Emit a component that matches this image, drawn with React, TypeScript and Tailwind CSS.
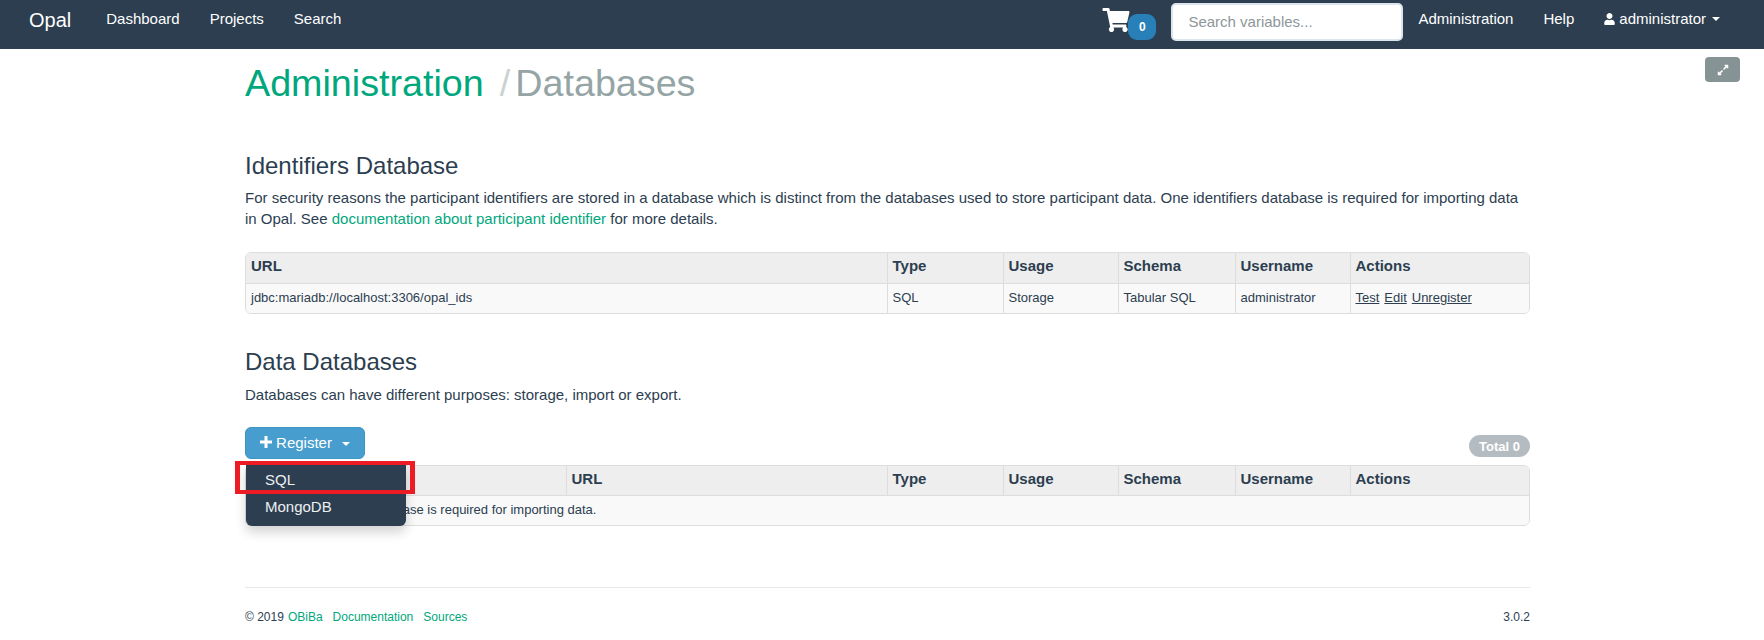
import React from "react";
import { FaShoppingCart, FaUser, FaExpandAlt } from "react-icons/fa";

const Caret = () => (
  <span className="ml-[6px] inline-block h-0 w-0 border-x-[4px] border-t-[4px] border-x-transparent border-t-current align-middle" />
);

const th = "border-l border-[#dddddd] px-[5px] pb-[4px] h-[30px] text-left align-middle text-[15px] font-bold first:border-l-0";
const th2 = "border-l border-[#dddddd] px-[5px] pb-[3px] h-[29px] text-left align-middle text-[15px] font-bold first:border-l-0";
const td = "border-l border-t border-[#dddddd] px-[5px] pb-[1px] h-[30px] align-middle text-[13px] first:border-l-0";

function Widths({ first }: { first: boolean }) {
  return first ? (
    <colgroup>
      <col className="w-[641px]" />
      <col className="w-[116px]" />
      <col className="w-[115px]" />
      <col className="w-[117px]" />
      <col className="w-[115px]" />
      <col />
    </colgroup>
  ) : (
    <colgroup>
      <col className="w-[320px]" />
      <col className="w-[321px]" />
      <col className="w-[116px]" />
      <col className="w-[115px]" />
      <col className="w-[117px]" />
      <col className="w-[115px]" />
      <col />
    </colgroup>
  );
}

export default function App() {
  return (
    <div className="min-h-[640px] bg-white text-[#2c3e50] font-['Liberation_Sans',Arial,sans-serif] text-[15px] leading-[21px]">
      <nav className="flex h-[49px] items-start bg-[#2c3e50] text-white">
        <a className="ml-[29px] mt-[10px] text-[20px] leading-[21px]">Opal</a>
        <a className="ml-[35px] mt-[8px]">Dashboard</a>
        <a className="ml-[30px] mt-[8px]">Projects</a>
        <a className="ml-[30px] mt-[8px]">Search</a>
        <div className="ml-auto flex items-start">
          <div className="relative mr-[41px] mt-[8px] h-[24px] w-[28px]">
            <FaShoppingCart className="h-[24px] w-[28px] text-white" />
            <span className="absolute left-[26px] top-[6px] flex h-[26px] w-[28px] items-center justify-center rounded-[9px] bg-[#2980b9] text-[12px] font-bold">0</span>
          </div>
          <input
            readOnly
            placeholder="Search variables..."
            className="mt-[3px] h-[38px] w-[232px] rounded-[5px] border-2 border-[#dce4ec] bg-white px-[15px] pb-[2px] text-[15px] text-[#2c3e50] placeholder:text-[#8d9699]"
          />
          <a className="ml-[15px] mt-[8px]">Administration</a>
          <a className="ml-[30px] mt-[8px]">Help</a>
          <a className="ml-[30px] mr-[44px] mt-[8px] flex items-center">
            <FaUser className="mr-[4px] h-[12px] w-[11px]" />
            administrator
            <Caret />
          </a>
        </div>
      </nav>

      <main className="relative ml-[245px] w-[1285px]">
        <h1 className="pt-[13px] text-[37.7px] leading-[43px] font-normal text-[#00a77d]">
          Administration
          <span className="ml-[16px] text-[#ccd1d1]">/</span>
          <span className="ml-[5px] text-[#95a5a6]">Databases</span>
        </h1>

        <h2 className="mt-[47px] text-[24px] leading-[27px] font-normal">Identifiers Database</h2>
        <p className="mt-[8px] text-[15px] leading-[21px]">
          For security reasons the participant identifiers are stored in a database which is distinct from the databases used to store participant data. One identifiers database is required for importing data in Opal. See{" "}
          <a className="text-[#00a77d]">documentation about participant identifier</a> for more details.
        </p>

        <div className="mt-[23px] overflow-hidden rounded-[6px] border border-[#dddddd]">
          <table className="w-full table-fixed border-collapse">
            <Widths first />
            <thead className="bg-[#eeeeee]">
              <tr>
                {["URL", "Type", "Usage", "Schema", "Username", "Actions"].map((h) => (
                  <th key={h} className={th}>{h}</th>
                ))}
              </tr>
            </thead>
            <tbody className="bg-[#f9f9f9]">
              <tr>
                <td className={td}>jdbc:mariadb://localhost:3306/opal_ids</td>
                <td className={td}>SQL</td>
                <td className={td}>Storage</td>
                <td className={td}>Tabular SQL</td>
                <td className={td}>administrator</td>
                <td className={td}>
                  <a className="underline">Test</a>
                  <a className="ml-[5px] underline">Edit</a>
                  <a className="ml-[5px] underline">Unregister</a>
                </td>
              </tr>
            </tbody>
          </table>
        </div>

        <h2 className="mt-[34px] text-[24px] leading-[27px] font-normal">Data Databases</h2>
        <p className="mt-[9px] text-[15px] leading-[21px]">Databases can have different purposes: storage, import or export.</p>

        <div className="relative mt-[22px] flex items-end justify-between">
          <button className="flex h-[32px] w-[120px] items-center justify-center rounded-[6px] border border-[#3f94c6] bg-[#469dce] pb-[2px] text-[15px] text-white">
            <svg viewBox="0 0 12 12" className="mr-[4px] h-[12px] w-[12px]" fill="currentColor">
              <path d="M4.5 0h3v4.5H12v3H7.5V12h-3V7.5H0v-3h4.5z" />
            </svg>
            Register
            <span className="ml-[4px]"><Caret /></span>
          </button>
          <span className="mb-[2px] flex h-[22px] w-[61px] items-center justify-center rounded-full bg-[#b4bcc2] text-[13px] font-bold text-white">Total 0</span>
        </div>

        <div className="relative mt-[6px]">
          <div className="overflow-hidden rounded-[6px] border border-[#dddddd]">
            <table className="w-full table-fixed border-collapse">
              <Widths first={false} />
              <thead className="bg-[#eeeeee]">
                <tr>
                  {["Name", "URL", "Type", "Usage", "Schema", "Username", "Actions"].map((h) => (
                    <th key={h} className={th2}>{h}</th>
                  ))}
                </tr>
              </thead>
              <tbody className="bg-[#f9f9f9]">
                <tr>
                  <td colSpan={7} className={td}>At least one storage database is required for importing data.</td>
                </tr>
              </tbody>
            </table>
          </div>

          <div className="absolute left-[1px] top-0 h-[61px] w-[160px] rounded-b-[6px] bg-[#2c3e50] text-[15px] text-[#ecf0f1] shadow-[0_6px_12px_rgba(0,0,0,0.18)]">
            <div className="px-[19px] pt-[4px]">SQL</div>
            <div className="mt-[6px] px-[19px]">MongoDB</div>
          </div>
          <div className="absolute left-[-10px] top-[-4px] h-[33px] w-[180px] border-x-[5px] border-y-[4px] border-[#ed1c24]" />
        </div>

        <footer className="mt-[61px] flex justify-between border-t border-[#e7e7e7] pt-[19px] text-[12px] leading-[20px]">
          <div>
            © 2019
            <a className="ml-[4px] text-[#00a77d]">OBiBa</a>
            <a className="ml-[10px] text-[#00a77d]">Documentation</a>
            <a className="ml-[10px] text-[#00a77d]">Sources</a>
          </div>
          <div>3.0.2</div>
        </footer>

        <button className="absolute right-[-210px] top-[8px] flex h-[25px] w-[35px] items-center justify-center rounded-[4px] bg-[#869394] text-white">
          <FaExpandAlt className="h-[12px] w-[12px]" />
        </button>
      </main>
    </div>
  );
}
